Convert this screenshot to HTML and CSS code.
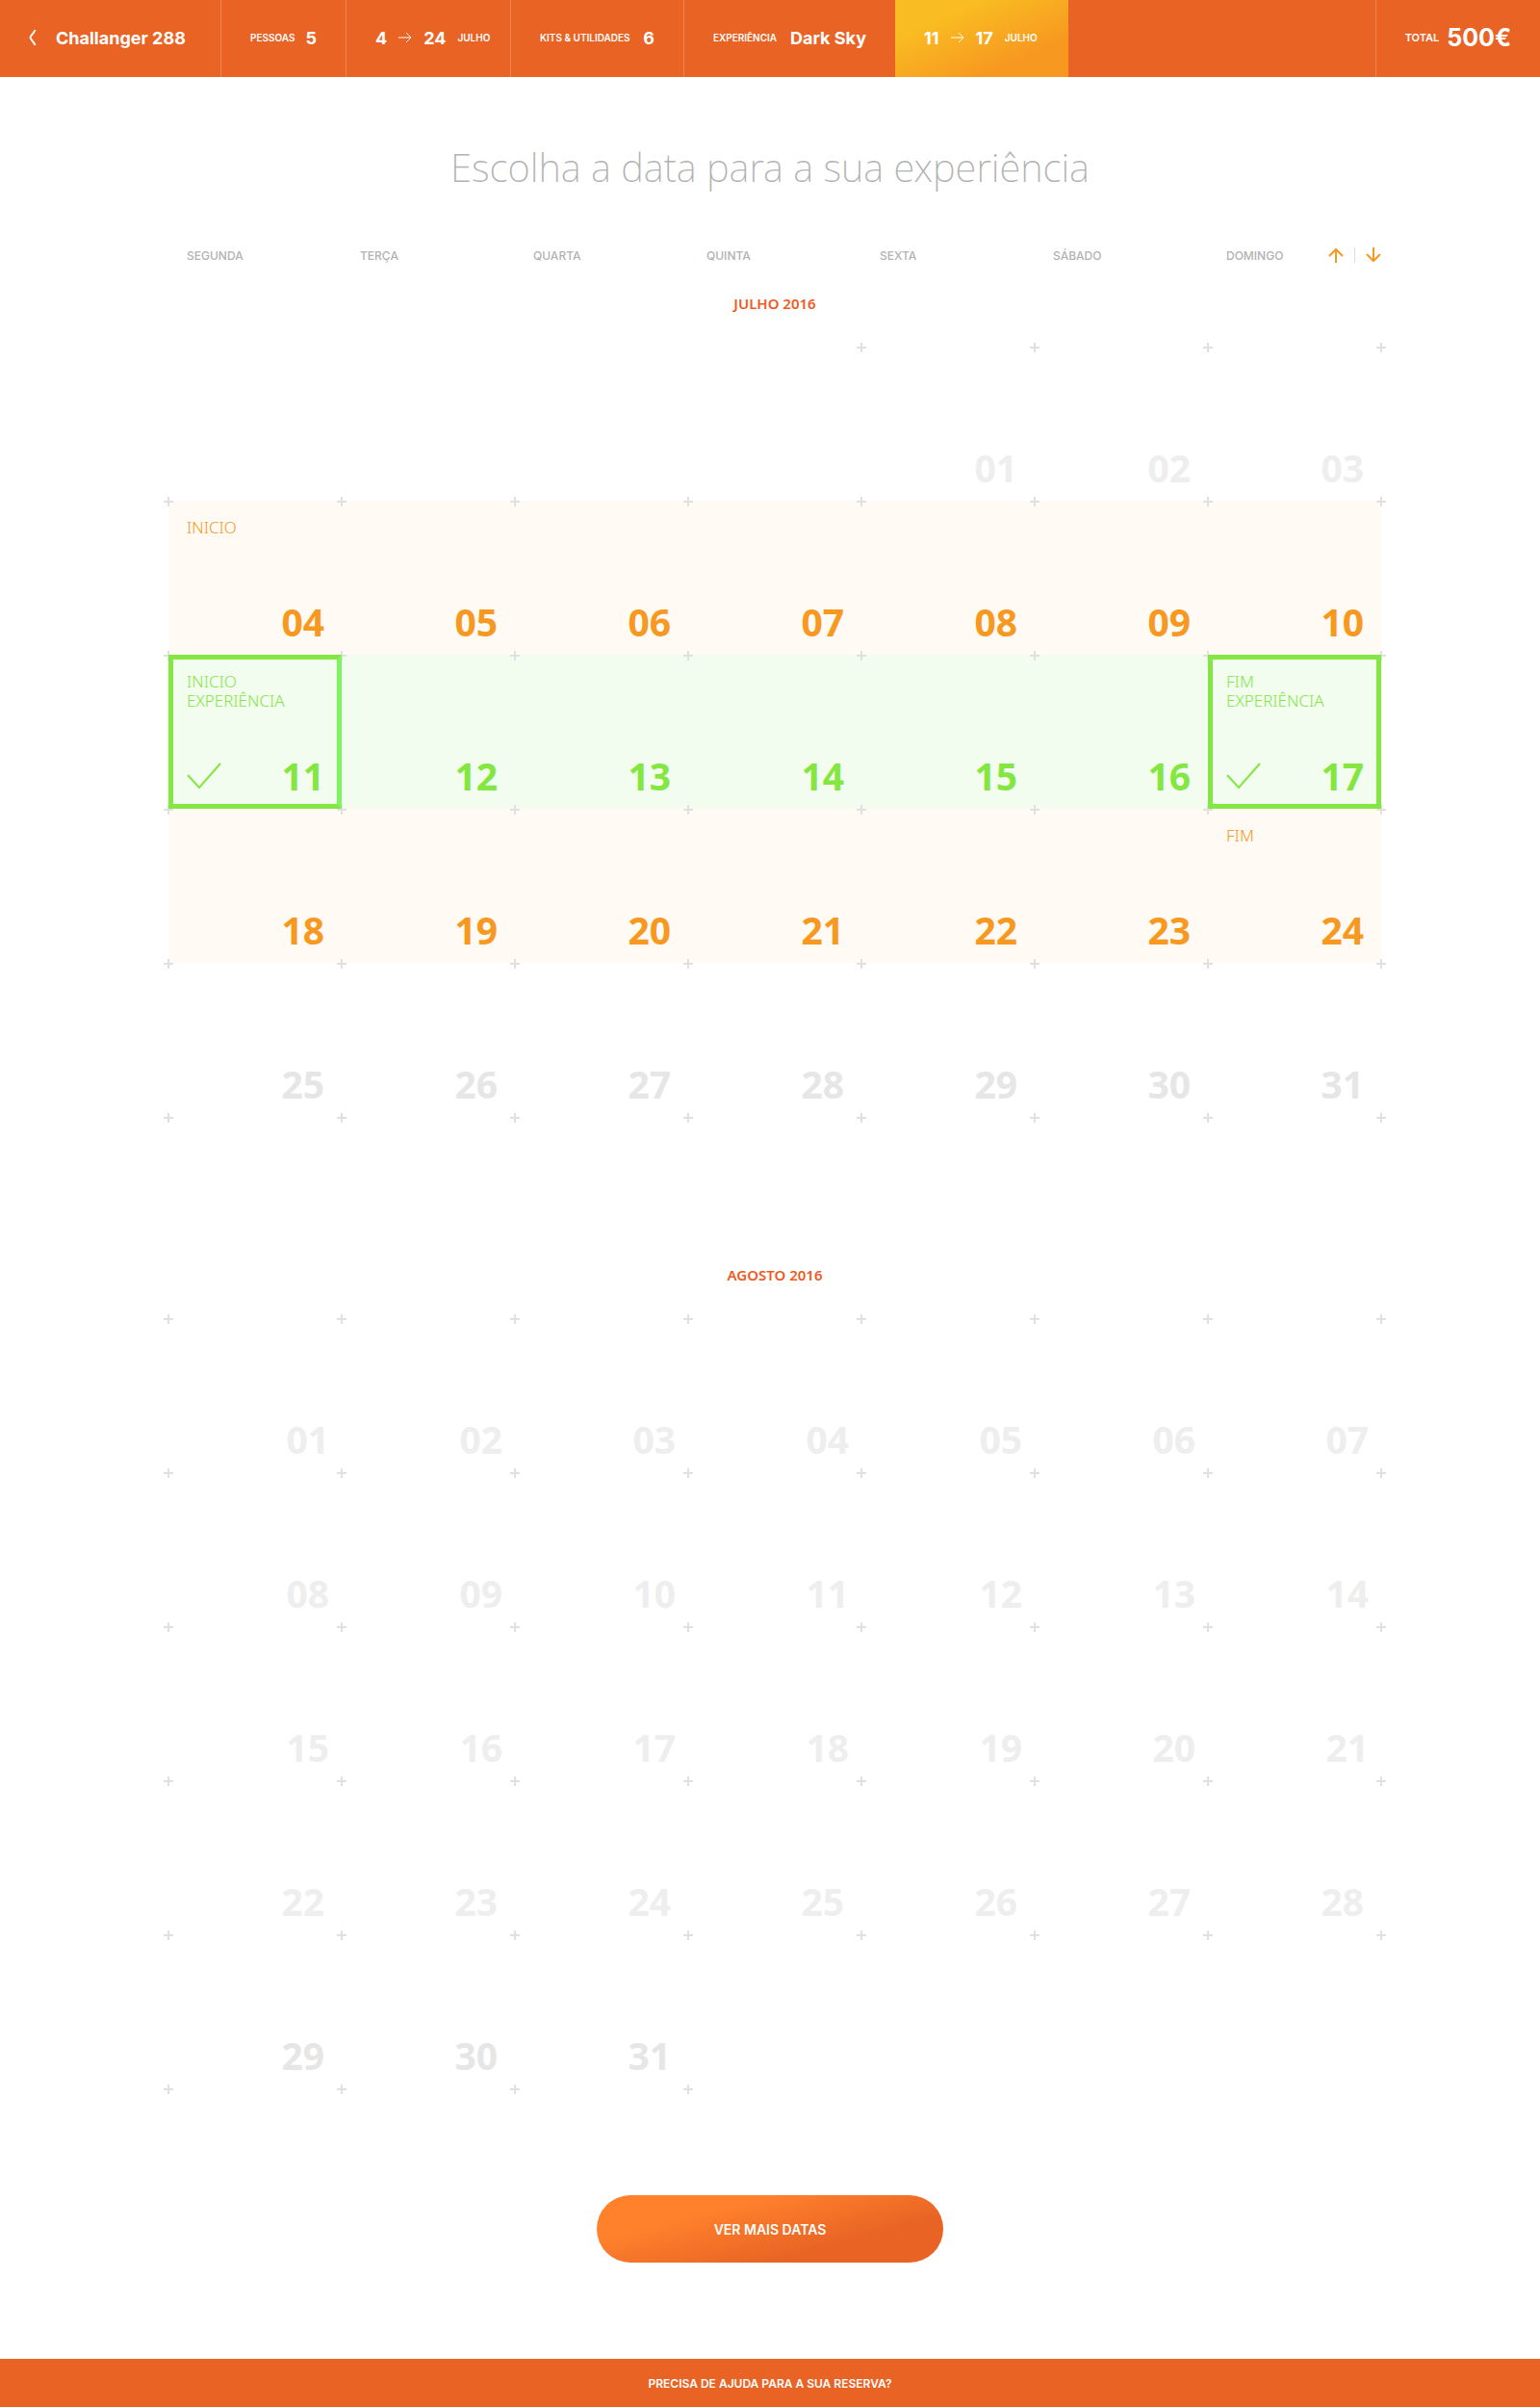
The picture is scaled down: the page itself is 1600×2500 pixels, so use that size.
FILE: index.html
```html
<!DOCTYPE html>
<html lang="pt">
<head>
<meta charset="utf-8">
<meta name="viewport" content="width=device-width, initial-scale=1">
<title>Escolha a data para a sua experiência</title>
<link rel="stylesheet" href="styles.css">
</head>
<body>
<header class="summary">
  <a class="step step-main" href="#"><svg class="back" width="8" height="18" viewBox="0 0 8 18" aria-hidden="true"><path d="M6.500 1C5 5 1.500 7 1.500 9S5 13 6.500 17"/></svg><strong>Challanger 288</strong></a>
  <a class="step" href="#"><span>PESSOAS</span><strong>5</strong></a>
  <a class="step step-dates" href="#"><strong>4</strong><svg class="to" width="14" height="12" viewBox="0 0 14 12" aria-hidden="true"><path d="M0 6h13M8 1l5 5-5 5"/></svg><strong>24</strong><span>JULHO</span></a>
  <a class="step" href="#"><span>KITS &amp; UTILIDADES</span><strong>6</strong></a>
  <a class="step" href="#"><span>EXPERIÊNCIA</span><strong>Dark Sky</strong></a>
  <a class="step step-dates step-current" href="#"><strong>11</strong><svg class="to" width="14" height="12" viewBox="0 0 14 12" aria-hidden="true"><path d="M0 6h13M8 1l5 5-5 5"/></svg><strong>17</strong><span>JULHO</span></a>
  <div class="step step-total"><span>TOTAL</span><strong class="price">500€</strong></div>
</header>

<main class="page">
  <h1>Escolha a data para a sua experiência</h1>
  <div class="calendar">
    <div class="weekdays">
      <span>SEGUNDA</span><span>TERÇA</span><span>QUARTA</span><span>QUINTA</span><span>SEXTA</span><span>SÁBADO</span>
      <div class="last-day"><span>DOMINGO</span>
        <div class="pager">
          <button type="button" aria-label="Mês anterior"><svg width="16" height="16" viewBox="0 0 16 16"><path d="M8 16V2M1 9l7-7 7 7"/></svg></button>
          <button type="button" aria-label="Mês seguinte"><svg width="16" height="16" viewBox="0 0 16 16"><path d="M8 0v14M1 7l7 7 7-7"/></svg></button>
        </div>
      </div>
    </div>

    <table class="month">
      <caption>JULHO 2016</caption>
      <tbody>
      <tr class="faint"><td></td><td></td><td></td><td></td><td class="date"><button class="day">01</button></td><td class="date"><button class="day">02</button></td><td class="date"><button class="day">03</button></td></tr>
      <tr class="stay"><td class="date"><button class="day"><span class="note">INICIO</span>04</button></td><td class="date"><button class="day">05</button></td><td class="date"><button class="day">06</button></td><td class="date"><button class="day">07</button></td><td class="date"><button class="day">08</button></td><td class="date"><button class="day">09</button></td><td class="date"><button class="day">10</button></td></tr>
      <tr class="experience"><td class="date"><button class="day picked picked-start"><span class="note">INICIO<br>EXPERIÊNCIA</span><svg class="check" width="36" height="28" viewBox="0 0 36 28" aria-hidden="true"><path d="M1 13l12 13L35 1"/></svg>11</button></td><td class="date"><button class="day">12</button></td><td class="date"><button class="day">13</button></td><td class="date"><button class="day">14</button></td><td class="date"><button class="day">15</button></td><td class="date"><button class="day">16</button></td><td class="date"><button class="day picked"><span class="note">FIM<br>EXPERIÊNCIA</span><svg class="check" width="36" height="28" viewBox="0 0 36 28" aria-hidden="true"><path d="M1 13l12 13L35 1"/></svg>17</button></td></tr>
      <tr class="stay"><td class="date"><button class="day">18</button></td><td class="date"><button class="day">19</button></td><td class="date"><button class="day">20</button></td><td class="date"><button class="day">21</button></td><td class="date"><button class="day">22</button></td><td class="date"><button class="day">23</button></td><td class="date"><button class="day"><span class="note">FIM</span>24</button></td></tr>
      <tr><td class="date"><button class="day">25</button></td><td class="date"><button class="day">26</button></td><td class="date"><button class="day">27</button></td><td class="date"><button class="day">28</button></td><td class="date"><button class="day">29</button></td><td class="date"><button class="day">30</button></td><td class="date"><button class="day">31</button></td></tr>
      </tbody>
    </table>

    <table class="month">
      <caption>AGOSTO 2016</caption>
      <tbody>
      <tr class="faint wide"><td class="date"><button class="day">01</button></td><td class="date"><button class="day">02</button></td><td class="date"><button class="day">03</button></td><td class="date"><button class="day">04</button></td><td class="date"><button class="day">05</button></td><td class="date"><button class="day">06</button></td><td class="date"><button class="day">07</button></td></tr>
      <tr class="faint wide"><td class="date"><button class="day">08</button></td><td class="date"><button class="day">09</button></td><td class="date"><button class="day">10</button></td><td class="date"><button class="day">11</button></td><td class="date"><button class="day">12</button></td><td class="date"><button class="day">13</button></td><td class="date"><button class="day">14</button></td></tr>
      <tr class="faint wide"><td class="date"><button class="day">15</button></td><td class="date"><button class="day">16</button></td><td class="date"><button class="day">17</button></td><td class="date"><button class="day">18</button></td><td class="date"><button class="day">19</button></td><td class="date"><button class="day">20</button></td><td class="date"><button class="day">21</button></td></tr>
      <tr class="faint"><td class="date"><button class="day">22</button></td><td class="date"><button class="day">23</button></td><td class="date"><button class="day">24</button></td><td class="date"><button class="day">25</button></td><td class="date"><button class="day">26</button></td><td class="date"><button class="day">27</button></td><td class="date"><button class="day">28</button></td></tr>
      <tr><td class="date"><button class="day">29</button></td><td class="date"><button class="day">30</button></td><td class="date"><button class="day">31</button></td><td></td><td></td><td></td><td></td></tr>
      </tbody>
    </table>
  </div>
  <button class="more" type="button">VER MAIS DATAS</button>
</main>

<footer class="help"><a href="#">PRECISA DE AJUDA PARA A SUA RESERVA?</a></footer>
</body>
</html>
```
FILE: styles.css
```css
* { box-sizing: border-box; }
body { margin: 0; background: #fff; font-family: Inter, "Liberation Sans", sans-serif; color: #b2b2b2; }
button { margin: 0; padding: 0; border: 0; background: none; font: inherit; color: inherit; cursor: pointer; }
a { color: inherit; text-decoration: none; }
svg { display: block; flex: none; fill: none; stroke: currentColor; }

/* Booking summary bar */
.summary {
  display: grid;
  grid-template-columns: 230px 130px 171px 180px 219px 180px 1fr;
  height: 80px;
  background: #e86324;
  color: #fff;
}
.step {
  display: flex;
  align-items: center;
  justify-content: space-between;
  padding: 0 30px 2px;
  border-right: 1px solid #ed8350;
  font-size: 10px;
  font-weight: 600;
  white-space: nowrap;
}
.step strong { font-size: 18px; font-weight: 700; }
.step:nth-child(5) { border-right: 0; }
.step-main { justify-content: flex-start; gap: 20px; }
.step-dates { justify-content: flex-start; gap: 12px; padding-right: 20px; }
.step-current { border-right: 0; background: linear-gradient(156deg, #f9bc22 25%, #f79820 75%); }
.step-total { justify-self: end; gap: 8px; border-right: 0; border-left: 1px solid #ed8350; font-size: 11px; }
.step-total .price { font-size: 25px; }
.back { stroke-width: 2; }
.to { stroke-width: 1; }

/* Page */
.page { display: flex; flex-direction: column; align-items: center; padding: 64px 20px 100px; }
h1 {
  margin: 0;
  font: 200 40px/60px "Noto Sans", sans-serif;
  text-align: center;
}
.calendar { width: 100%; max-width: 1260px; margin: 49px 0 0 10px; }

.weekdays {
  display: grid;
  grid-template-columns: repeat(7, 1fr);
  height: 24px;
  align-items: center;
  font-size: 12px;
  font-weight: 500;
}
.weekdays > * { padding-left: 19px; }
.last-day { display: flex; justify-content: space-between; align-items: center; }
.pager { display: flex; color: #f79820; }
.pager button + button { border-left: 1px solid #ddd; margin-left: 11px; padding-left: 11px; }
.pager svg { stroke-width: 2; }

/* Month grid */
.month { width: 100%; table-layout: fixed; border-collapse: collapse; }
.month + .month { margin-top: 126px; }
.month caption { padding: 28px 0 35px; font: 600 15px/20px "Noto Sans", sans-serif; color: #f05a1e; }
.month td { position: relative; height: 160px; padding: 0; }
.date::before {
  --plus: url("data:image/svg+xml,%3Csvg xmlns='http://www.w3.org/2000/svg' width='10' height='10'%3E%3Cpath d='M0 5h10M5 0v10' stroke='%23e0e0e0' stroke-width='2'/%3E%3C/svg%3E");
  content: "";
  position: absolute;
  inset: -4px -5px -6px;
  background: var(--plus) 0 0, var(--plus) 100% 0, var(--plus) 0 100%, var(--plus) 100% 100%;
  background-repeat: no-repeat;
  pointer-events: none;
}
.day {
  position: relative;
  display: flex;
  width: 100%;
  height: 160px;
  align-items: flex-end;
  justify-content: flex-end;
  padding: 0 18px 14px;
  font: 700 39px/40px "Noto Sans", sans-serif;
  color: #e6e6e6;
}
.faint .day { color: #eee; }
.wide .day { padding-right: 13px; }
.stay { background: #fffaf4; }
.stay .day { color: #f79820; }
.experience { background: #f2fdf0; }
.experience .day { color: #84e640; }
.note {
  position: absolute;
  top: 18px;
  left: 19px;
  font-size: 17px;
  font-weight: 350;
  line-height: 20px;
  text-align: left;
}
.picked { z-index: 1; padding: 0 13px 9px 14px; border: 5px solid #84e640; }
.picked-start { border-right-color: #7ef560; }
.picked .note { top: 13px; left: 14px; }
.check { margin: 0 auto 6px 0; stroke-width: 2; }

.more {
  width: 360px;
  height: 70px;
  margin-top: 111px;
  border-radius: 35px;
  background: linear-gradient(165deg, #ff812c 28%, #e86324 72%);
  color: #fff;
  font-size: 14px;
  font-weight: 600;
}
.help {
  display: flex;
  height: 50px;
  align-items: center;
  justify-content: center;
  background: #e86324;
  color: #fff;
  font-size: 12px;
  font-weight: 600;
}
```
